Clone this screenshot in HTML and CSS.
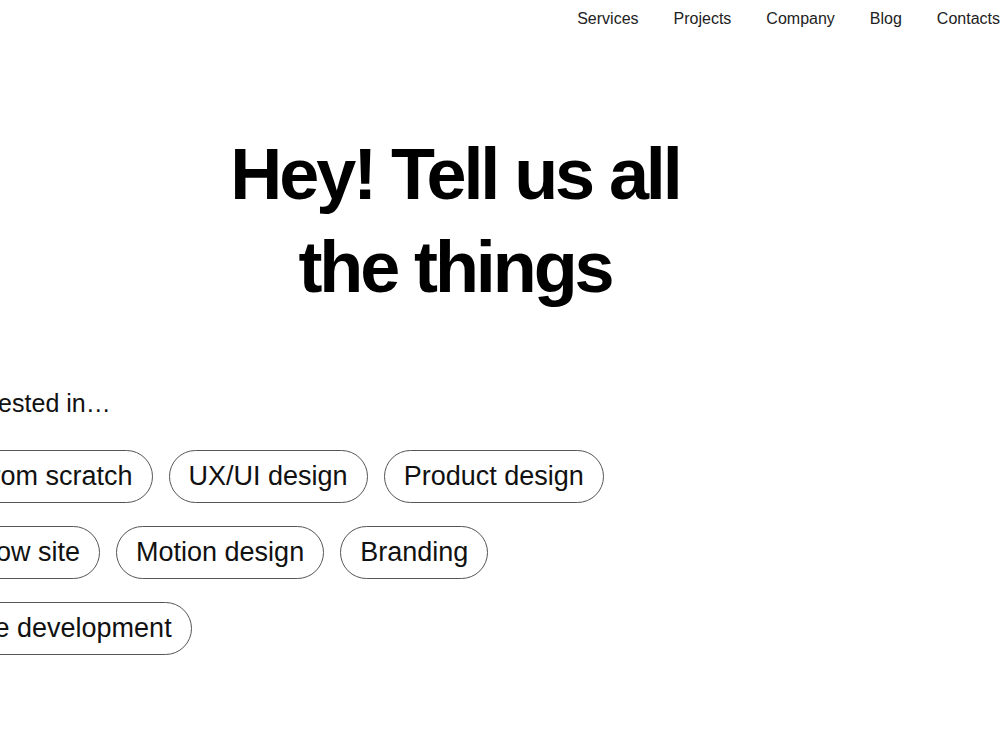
FILE: index.html
```html
<!DOCTYPE html>
<html lang="en">
<head>
<meta charset="utf-8">
<title>Contact</title>
<link rel="stylesheet" href="styles.css">
</head>
<body>
<div class="page">
  <header class="header">
    <nav class="nav">
      <a class="nav-link" href="#">Services</a>
      <a class="nav-link" href="#">Projects</a>
      <a class="nav-link" href="#">Company</a>
      <a class="nav-link" href="#">Blog</a>
      <a class="nav-link" href="#">Contacts</a>
    </nav>
  </header>
  <main class="main">
    <h1 class="title">Hey! Tell us all<br>the things</h1>
    <section class="interests">
      <p class="label">I'm interested in…</p>
      <div class="chips">
        <span class="chip">Site from scratch</span>
        <span class="chip">UX/UI design</span>
        <span class="chip">Product design</span>
        <span class="chip">Tv show site</span>
        <span class="chip">Motion design</span>
        <span class="chip">Branding</span>
        <span class="chip">Mobile development</span>
      </div>
    </section>
  </main>
</div>
</body>
</html>
```

FILE: styles.css
```css
html, body {
  margin: 0;
  padding: 0;
  background: #fff;
  overflow: hidden;
}

body {
  font-family: "Liberation Sans", Arial, sans-serif;
  color: #000;
}

.page {
  width: 1090px;
  margin-left: -90px;
}

.header {
  display: flex;
  justify-content: flex-end;
  padding: 9px 0 7px;
}

.nav {
  display: flex;
  gap: 35px;
}

.nav-link {
  font-size: 16px;
  line-height: 20px;
  color: #222;
  text-decoration: none;
}

.main {
  display: flex;
  flex-direction: column;
}

.title {
  margin: 92px 0 0;
  text-align: center;
  font-size: 72px;
  line-height: 93px;
  font-weight: 700;
  letter-spacing: -0.043em;
}

.interests {
  margin-top: 74px;
  width: 760px;
}

.label {
  margin: 0;
  font-size: 25px;
  line-height: 30px;
  color: #111;
}

.chips {
  margin-top: 32px;
  display: flex;
  flex-wrap: wrap;
  column-gap: 16px;
  row-gap: 23px;
}

.chip {
  border: 1px solid #555;
  border-radius: 999px;
  padding: 9px 19px;
  font-size: 27px;
  line-height: 33px;
  color: #111;
  white-space: nowrap;
}
```
